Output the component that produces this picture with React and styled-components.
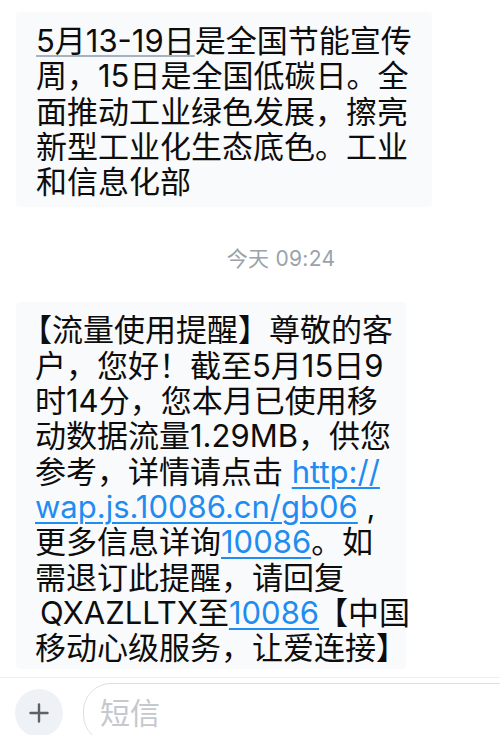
import React from 'react';
import styled, { createGlobalStyle } from 'styled-components';

const GlobalStyle = createGlobalStyle`
  html, body {
    margin: 0;
    padding: 0;
    background: #ffffff;
  }
  body {
    font-family: 'Inter', 'Noto Sans CJK SC', sans-serif;
    -webkit-font-smoothing: antialiased;
  }
`;

const Screen = styled.div`
  width: 500px;
  height: 735px;
  overflow: hidden;
  display: flex;
  flex-direction: column;
  background: #fff;
`;

const Thread = styled.div`
  flex: 1;
  display: flex;
  flex-direction: column;
  align-items: flex-start;
  padding: 12px 0 0 16px;
`;

const Bubble = styled.div`
  width: ${(p) => p.width}px;
  box-sizing: border-box;
  background: #f9fafb;
  border-radius: 4px;
  padding: ${(p) => p.pad};
  font-size: 31px;
  line-height: 35.3px;
  color: #0d0d0d;
  font-family: 'Inter', 'Noto Sans CJK SC', sans-serif;
  white-space: nowrap;
`;

const DateMark = styled.span`
  text-decoration: underline;
  text-decoration-color: #a7b2c0;
  text-decoration-thickness: 1.5px;
  text-underline-offset: 3px;
`;

const Link = styled.span`
  color: #1e8cf0;
  text-decoration: underline;
  text-decoration-thickness: 2px;
  text-underline-offset: 4px;
`;

const Bracket = styled.span`
  margin-left: ${(p) => p.left || 0}px;
`;

const Indent = styled.span`
  margin-left: 5px;
`;

const Stamp = styled.div`
  align-self: stretch;
  text-align: center;
  padding: 40px 0 0 46px;
  height: 55px;
  font-size: 21px;
  line-height: 24px;
  color: #9aa2ab;
  font-family: 'Inter', 'Noto Sans CJK SC', sans-serif;
  letter-spacing: 0.3px;
`;

const Composer = styled.div`
  height: 52px;
  border-top: 1px solid #eceef1;
  display: flex;
  align-items: flex-start;
  padding: 5px 0 0 15px;
  gap: 20px;
`;

const AddButton = styled.div`
  width: 48px;
  height: 48px;
  margin-top: 6px;
  border-radius: 50%;
  background: #eef1f5;
  display: flex;
  align-items: center;
  justify-content: center;
  flex-shrink: 0;
`;

const Field = styled.div`
  flex: 1;
  height: 60px;
  margin-right: -40px;
  border: 1px solid #dcdfe3;
  border-radius: 28px;
  box-sizing: border-box;
  padding: 7px 0 0 16px;
  font-size: 30px;
  line-height: 40px;
  color: #c5c8cd;
  font-family: 'Noto Sans CJK SC', sans-serif;
`;

function PlusIcon() {
  return (
    <svg width="20" height="20" viewBox="0 0 20 20">
      <path d="M10 1.5v17M1.5 10h17" stroke="#5d6168" strokeWidth="2.4" strokeLinecap="round" />
    </svg>
  );
}

export default function App() {
  return (
    <Screen>
      <GlobalStyle />
      <Thread>
        <Bubble width={416} pad="11px 0 8px 20px">
          <DateMark>5月13-19日</DateMark>是全国节能宣传<br />
          周，15日是全国低碳日。全<br />
          面推动工业绿色发展，擦亮<br />
          新型工业化生态底色。工业<br />
          和信息化部
        </Bubble>
        <Stamp>今天 09:24</Stamp>
        <Bubble width={390} pad="10px 0 4px 19px">
          <Bracket left={-14}>【</Bracket>流量使用提醒】尊敬的客<br />
          户，您好！截至5月15日9<br />
          时14分，您本月已使用移<br />
          动数据流量1.29MB，供您<br />
          参考，详情请点击 <Link>http://</Link><br />
          <Link>wap.js.10086.cn/gb06</Link> ,<br />
          更多信息详询<Link>10086</Link>。如<br />
          需退订此提醒，请回复<br />
          <Indent>QXAZLLTX</Indent>至<Link>10086</Link><Bracket left={-2}>【</Bracket>中国<br />
          移动心级服务，让爱连接】
        </Bubble>
      </Thread>
      <Composer>
        <AddButton>
          <PlusIcon />
        </AddButton>
        <Field>短信</Field>
      </Composer>
    </Screen>
  );
}
